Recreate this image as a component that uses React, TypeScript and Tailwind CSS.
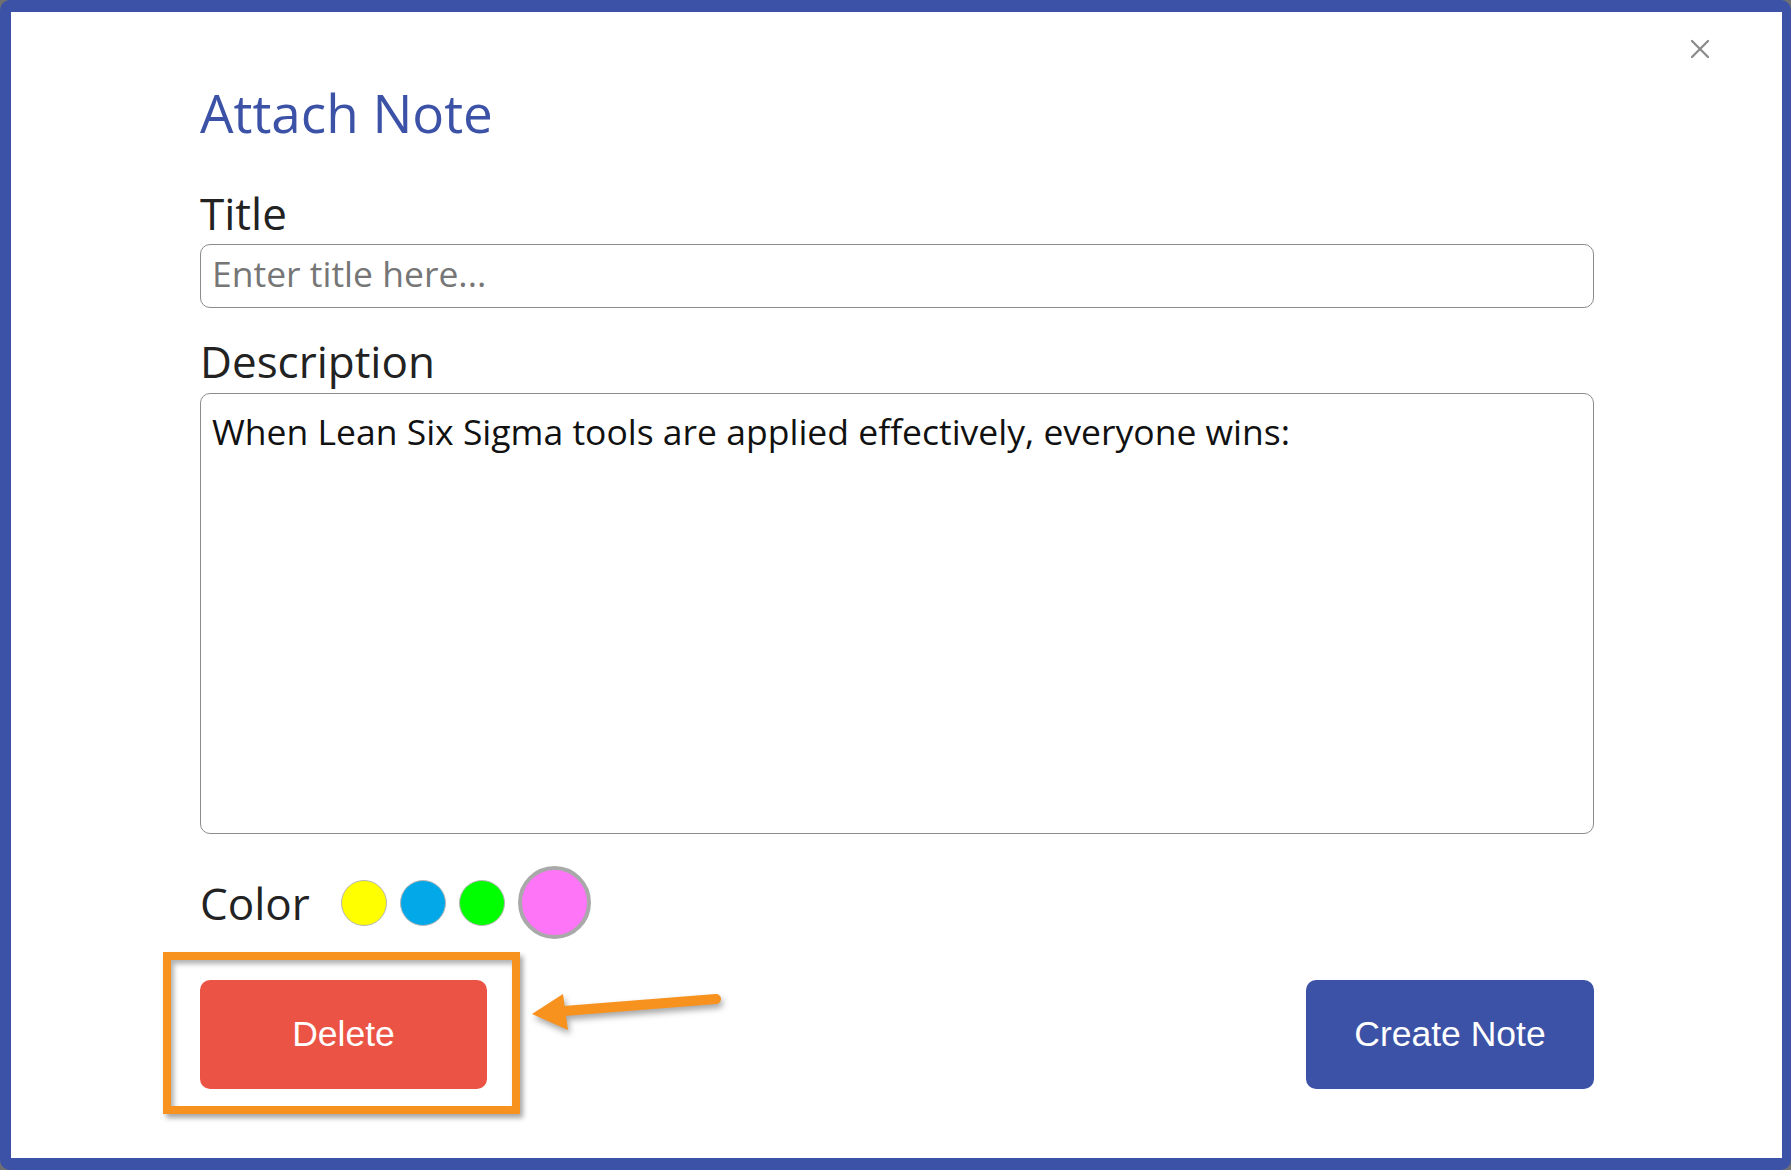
import { X } from "lucide-react";

const swatches = [
  { name: "yellow", cls: "h-[46px] w-[46px] border border-[#b5b5b5] bg-[#ffff00]" },
  { name: "blue", cls: "h-[46px] w-[46px] border border-[#b5b5b5] bg-[#02a8e8]" },
  { name: "green", cls: "h-[46px] w-[46px] border border-[#b5b5b5] bg-[#00ff00]" },
  { name: "pink", cls: "h-[73px] w-[73px] border-[4px] border-[#a9a9a9] bg-[#ff75f7]" },
];

export default function App() {
  return (
    <div className="h-[1170px] w-full bg-[#707070]">
      <div className="relative h-full rounded-[10px] border-t-[12px] border-r-[9px] border-b-[12px] border-l-[11px] border-[#3c52a7] bg-white font-['Open_Sans',sans-serif]">
        {/* close */}
        <button className="absolute top-[21px] right-[66px] text-[#8a8a8a]">
          <X size={32} strokeWidth={1.7} />
        </button>

        <div className="ml-[189px] w-[1394px] pt-[74px]">
          <h1 className="text-[53px] leading-none text-[#3c52a7]">Attach Note</h1>

          <div className="mt-[52px] text-[44px] leading-none text-[#222]">Title</div>
          <input
            className="mt-[9px] h-[64px] w-full rounded-[10px] border-[1.5px] border-[#8c8c8c] px-[11px] pb-[6px] text-[35.5px] text-[#222] outline-none placeholder:text-[#767676]"
            placeholder="Enter title here..."
          />

          <div className="mt-[31px] text-[44px] leading-none text-[#222]">Description</div>
          <textarea
            className="mt-[10px] block h-[441px] w-full resize-none rounded-[10px] border-[1.5px] border-[#8c8c8c] px-[11px] pt-[11px] text-[35.5px] text-[#111] outline-none"
            defaultValue="When Lean Six Sigma tools are applied effectively, everyone wins:"
          />

          <div className="mt-[32px] flex h-[73px] items-center">
            <span className="text-[44px] leading-none text-[#222]">Color</span>
            <div className="ml-[31px] flex items-center gap-[13px]">
              {swatches.map((s) => (
                <div key={s.name} className={`rounded-full ${s.cls}`} />
              ))}
            </div>
          </div>

          <div className="mt-[41px] flex justify-between font-['Liberation_Sans',Arial,sans-serif]">
            <button className="h-[109px] w-[287px] rounded-[10px] bg-[#eb5444] text-[35.5px] text-white">Delete</button>
            <button className="h-[109px] w-[288px] rounded-[10px] bg-[#3c52a7] text-[35.5px] text-white">Create Note</button>
          </div>
        </div>

        {/* annotation: highlight box */}
        <div className="absolute top-[940px] left-[152px] h-[162px] w-[357px] border-[8px] border-[#f7921e] shadow-[3px_4px_5px_rgba(0,0,0,0.35),inset_3px_4px_5px_rgba(0,0,0,0.3)]" />

        {/* annotation: arrow */}
        <svg
          className="absolute top-[968px] left-[509px] drop-shadow-[2px_4px_3px_rgba(0,0,0,0.35)]"
          width="220"
          height="70"
          viewBox="0 0 220 70"
        >
          <line x1="44" y1="31" x2="196" y2="19" stroke="#f7921e" strokeWidth="10" strokeLinecap="round" />
          <polygon points="12,34 43,14 48,50" fill="#f7921e" />
        </svg>
      </div>
    </div>
  );
}
